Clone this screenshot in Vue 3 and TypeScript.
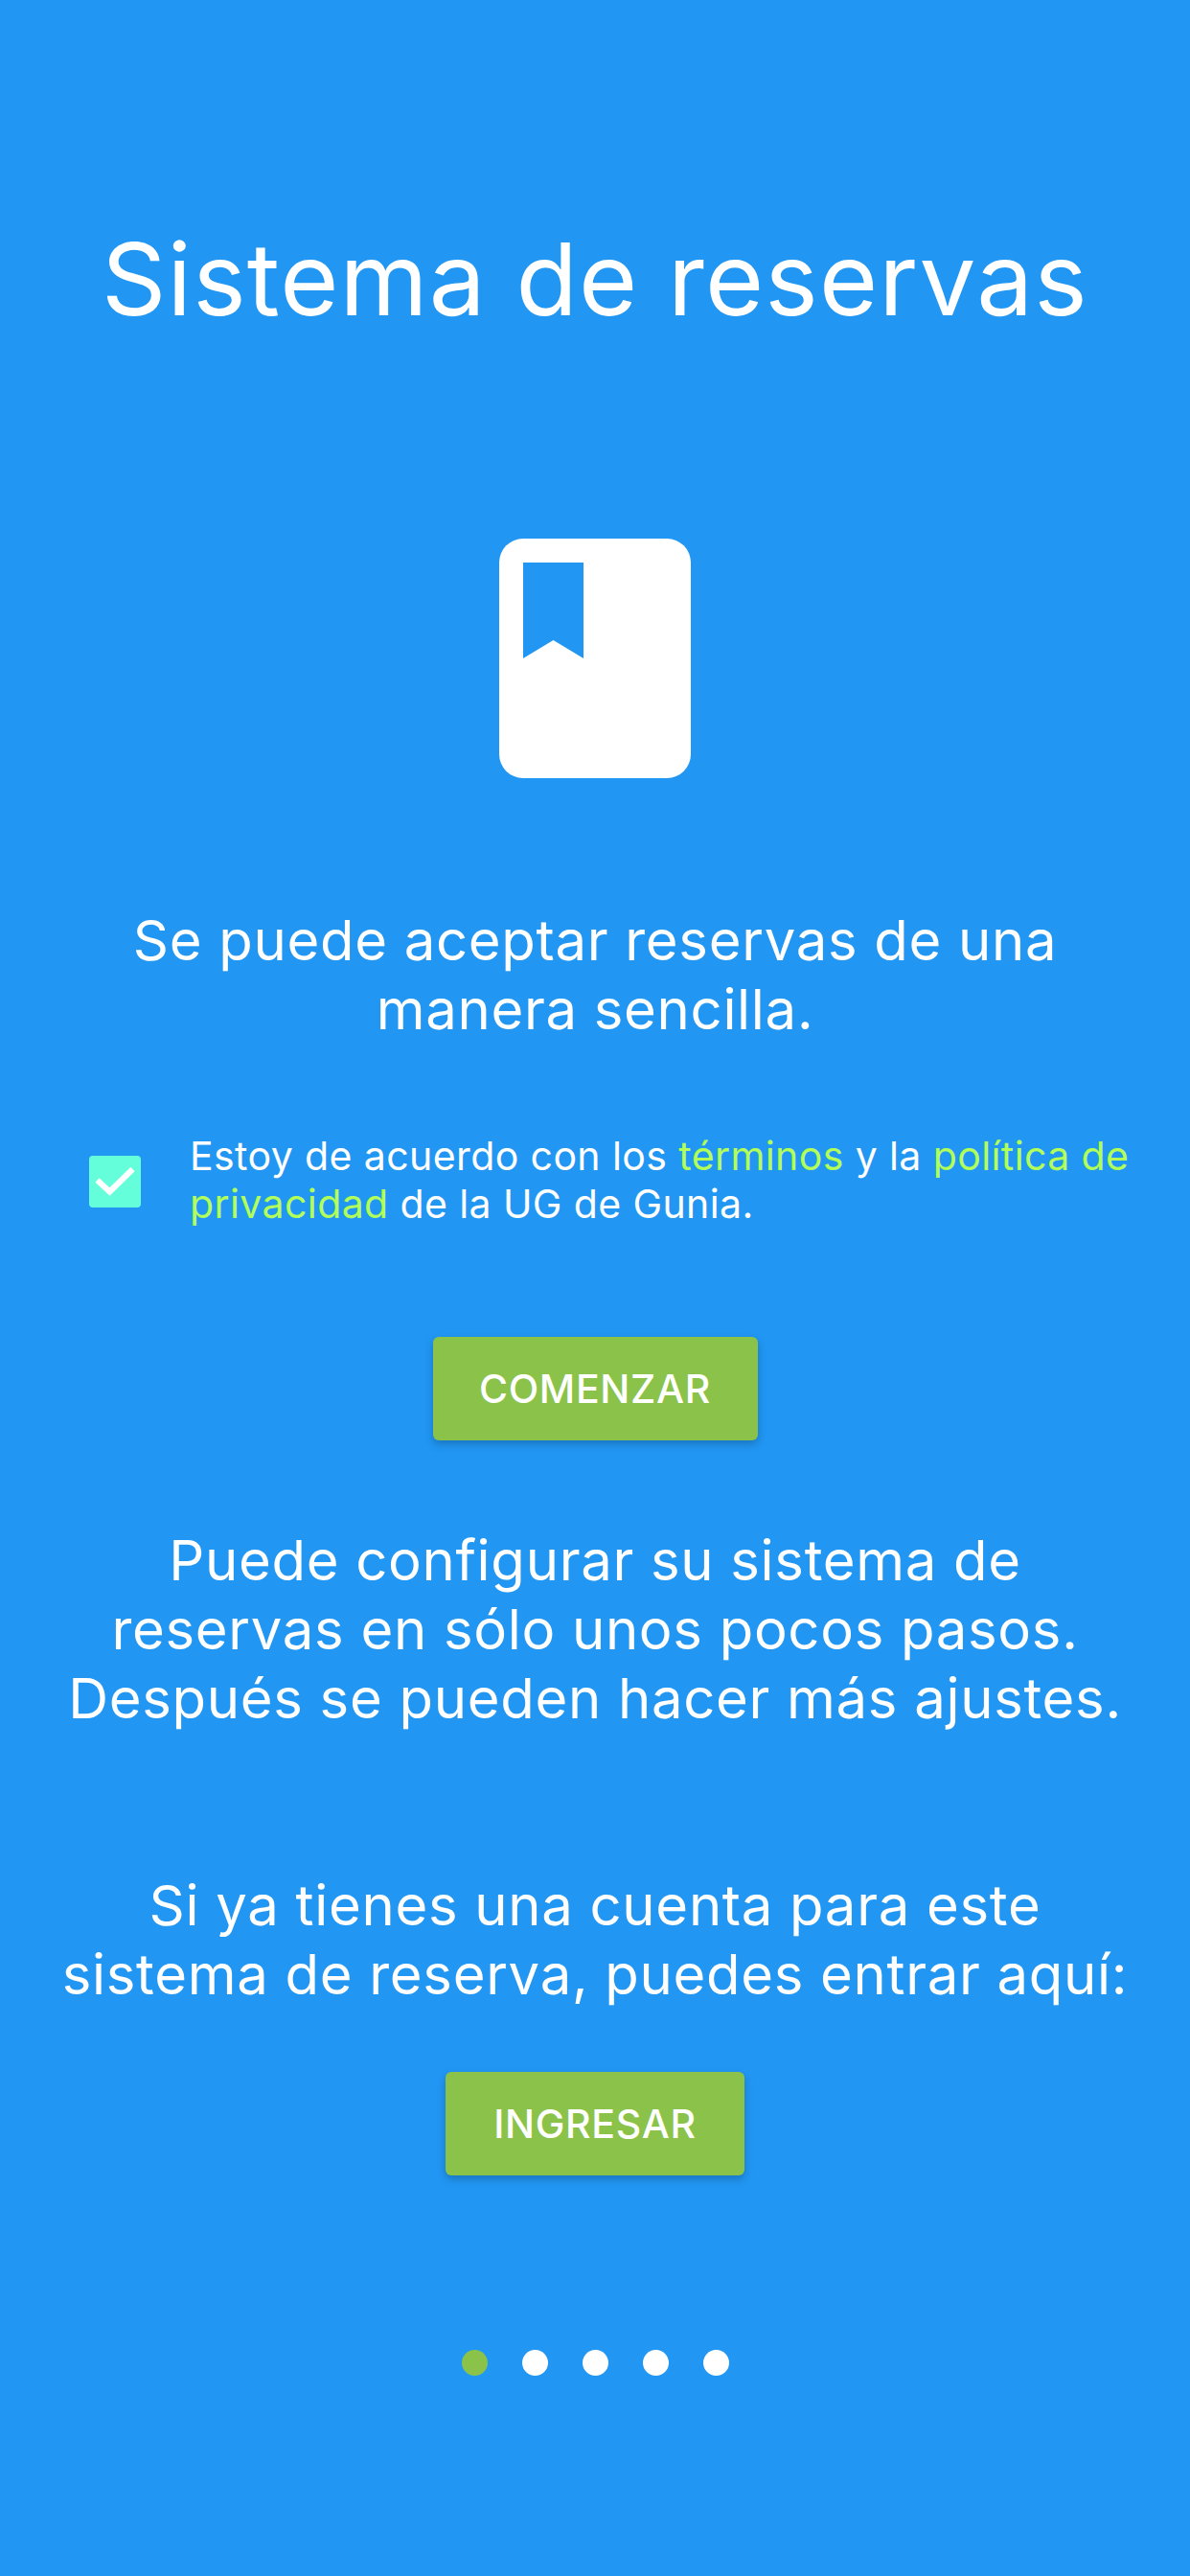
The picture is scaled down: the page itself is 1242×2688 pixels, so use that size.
<script setup lang="ts">
const dots = [0, 1, 2, 3, 4]
</script>

<template>
  <main class="screen">
    <h1 class="title">Sistema de reservas</h1>
    <div class="book">
      <svg class="mark" viewBox="0 0 63 100" width="63" height="100"><path d="M0 0H63V100L31.5 81L0 100Z" fill="#2196f3" /></svg>
    </div>
    <p class="lead first">Se puede aceptar reservas de una<br />manera sencilla.</p>
    <div class="terms">
      <span class="check">
        <svg viewBox="0 0 54 54" width="54" height="54"><path d="M8.5 25.5L21.5 37.5L45.5 14" fill="none" stroke="#fff" stroke-width="6" /></svg>
      </span>
      <p>Estoy de acuerdo con los <a>términos</a> y la <a>política de privacidad</a> de la UG de Gunia.</p>
    </div>
    <button class="btn start">COMENZAR</button>
    <p class="lead second">Puede configurar su sistema de<br />reservas en sólo unos pocos pasos.<br />Después se pueden hacer más ajustes.</p>
    <p class="lead third">Si ya tienes una cuenta para este<br />sistema de reserva, puedes entrar aquí:</p>
    <button class="btn login">INGRESAR</button>
    <div class="dots">
      <span v-for="d in dots" :key="d" class="dot" :class="{ active: d === 0 }"></span>
    </div>
  </main>
</template>

<style>
html, body { margin: 0; background: #2196f3; }
</style>

<style scoped>
.screen {
  width: 1242px; height: 2688px; box-sizing: border-box; background: #2196f3; color: #fff;
  font-family: Inter, "Liberation Sans", sans-serif;
  display: flex; flex-direction: column; align-items: center; padding-top: 231px; overflow: hidden;
}
.title { margin: 0; font-size: 105px; line-height: 120px; font-weight: 400; white-space: nowrap; letter-spacing: 1.15px; }
.book { margin-top: 211px; width: 200px; height: 250px; border-radius: 25px; background: #fff; box-sizing: border-box; padding: 25px 0 0 25px; }
.mark { display: block; }
.lead { margin: 0; font-size: 58px; line-height: 72px; text-align: center; white-space: nowrap; letter-spacing: 0.7px; }
.first { margin-top: 133px; }
.terms { margin-top: 92px; width: 1242px; box-sizing: border-box; padding: 0 50px 0 93px; display: flex; align-items: center; gap: 51px; }
.check { flex: none; width: 54px; height: 54px; margin-top: 3px; border-radius: 4px; background: #64ffda; }
.check svg { display: block; }
.terms p { margin: 0; font-size: 41px; line-height: 50px; letter-spacing: 0.4px; }
.terms a { color: #b2ff59; }
.btn { border: 0; border-radius: 6px; background: #8bc34a; color: #fff; font: 500 41px/108px Inter, "Liberation Sans", sans-serif; height: 108px; padding: 0; letter-spacing: 0.7px; box-shadow: 0 4px 8px rgba(0,0,0,.22); }
.start { margin-top: 114px; width: 339px; }
.second { margin-top: 89px; }
.third { margin-top: 144px; }
.login { margin-top: 66px; width: 312px; }
.dots { margin-top: 182px; display: flex; gap: 36px; }
.dot { width: 27px; height: 27px; border-radius: 50%; background: #fff; }
.dot.active { background: #8bc34a; }
</style>
